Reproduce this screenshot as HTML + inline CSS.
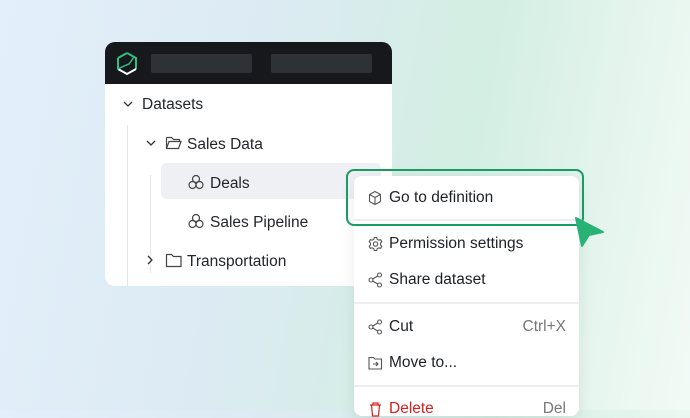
<!DOCTYPE html>
<html><head><style>
*{margin:0;padding:0;box-sizing:border-box}
body{width:690px;height:410px;overflow:hidden;position:relative;font-family:"Liberation Sans",sans-serif;
background:linear-gradient(100deg,#e3effb 0%,#dcebf3 35%,#d3eee2 65%,#eaf7f1 90%,#f2faf6 100%);}
.panel{position:absolute;left:105px;top:42px;width:287px;height:244px;background:#fff;border-radius:10px;overflow:hidden}
.hdr{height:42px;background:#16181b;position:relative}
.bar{position:absolute;top:12px;height:19px;background:#2e3236;border-radius:2px}
.t{position:absolute;font-size:15.5px;color:#22252a;white-space:nowrap}
.vl{position:absolute;width:1px;background:#e3e5e8}
.menu{position:absolute;left:354px;top:176px;width:225px;height:240px;background:#fff;border-radius:8px;box-shadow:0 4px 16px rgba(0,0,0,.08)}
.sep{position:absolute;left:0;width:225px;height:2px;background:#eceef1}
.mi{position:absolute;left:14px;font-size:15.5px;color:#1d2024;white-space:nowrap}
.mi svg{position:absolute;left:0;top:1px}
.mi span{position:absolute;left:21px;top:0}
</style></head><body>
<div class="panel">
 <div class="hdr">
  <svg style="position:absolute;left:10px;top:9px" width="24" height="26" viewBox="0 0 24 26"><path d="M12 2L21 7V18" fill="none" stroke="#2fbf80" stroke-width="2"/><path d="M3 7L12 2M3 7V18" fill="none" stroke="#2fbf80" stroke-width="2"/><path d="M3 18L12 23L21 18" fill="none" stroke="#fff" stroke-width="2"/><path d="M3 18L9 15L14 13L19 6" fill="none" stroke="#2fbf80" stroke-width="1.5"/></svg>
  <div class="bar" style="left:46px;width:101px"></div>
  <div class="bar" style="left:166px;width:101px"></div>
 </div>
 <div class="vl" style="left:22px;top:83px;height:161px"></div>
 <div class="vl" style="left:45px;top:133px;height:98px"></div>
 <div style="position:absolute;left:56px;top:121px;width:220px;height:36px;background:#eef0f3;border-radius:5px"></div>
 <svg style="position:absolute;left:17px;top:57px" width="12" height="10"><path d="M2 3L6 7L10 3" fill="none" stroke="#333" stroke-width="1.3"/></svg>
 <div class="t" style="left:37px;top:54px">Datasets</div>
 <svg style="position:absolute;left:40px;top:96px" width="12" height="10"><path d="M2 3L6 7L10 3" fill="none" stroke="#333" stroke-width="1.3"/></svg>
 <svg style="position:absolute;left:60px;top:93px" width="18" height="16"><path d="M1.5 2.5h5l2 2h6v2M1.5 2.5v11h12l2.5-7h-12l-2.5 7" fill="none" stroke="#444" stroke-width="1.2"/></svg>
 <div class="t" style="left:82px;top:94px">Sales Data</div>
 <svg style="position:absolute;left:82px;top:131px" width="18" height="18"><g fill="none" stroke="#444" stroke-width="1.2"><circle cx="9" cy="6" r="3.5"/><circle cx="5.5" cy="12" r="3.5"/><circle cx="12.5" cy="12" r="3.5"/></g></svg>
 <div class="t" style="left:105px;top:133px">Deals</div>
 <svg style="position:absolute;left:82px;top:170px" width="18" height="18"><g fill="none" stroke="#444" stroke-width="1.2"><circle cx="9" cy="6" r="3.5"/><circle cx="5.5" cy="12" r="3.5"/><circle cx="12.5" cy="12" r="3.5"/></g></svg>
 <div class="t" style="left:105px;top:172px">Sales Pipeline</div>
 <svg style="position:absolute;left:40px;top:212px" width="10" height="12"><path d="M3 2L7 6L3 10" fill="none" stroke="#333" stroke-width="1.3"/></svg>
 <svg style="position:absolute;left:60px;top:210px" width="18" height="17"><path d="M1.5 2.5h5l2 2h7.5v10h-14.5z" fill="none" stroke="#444" stroke-width="1.2"/></svg>
 <div class="t" style="left:82px;top:211px">Transportation</div>
</div>
<div class="menu">
 <div class="mi" style="top:13px"><svg width="14" height="16"><path d="M7 1.5L12.5 4.5V11.5L7 14.5L1.5 11.5V4.5Z M1.5 4.5L7 7.5L12.5 4.5M7 7.5V14.5" fill="none" stroke="#555" stroke-width="1.1"/></svg><span>Go to definition</span></div>
 <div class="sep" style="top:43px"></div>
 <div class="mi" style="top:59px"><svg width="15" height="16"><circle cx="7.5" cy="8" r="2.2" fill="none" stroke="#555" stroke-width="1.1"/><path d="M6.3 1.5h2.4l.5 1.8 1.6.9 1.8-.5 1.2 2.1-1.3 1.3v1.8l1.3 1.3-1.2 2.1-1.8-.5-1.6.9-.5 1.8H6.3l-.5-1.8-1.6-.9-1.8.5-1.2-2.1 1.3-1.3V7.1L1.2 5.8l1.2-2.1 1.8.5 1.6-.9z" fill="none" stroke="#555" stroke-width="1.1"/></svg><span>Permission settings</span></div>
 <div class="mi" style="top:95px"><svg width="15" height="16"><g fill="none" stroke="#555" stroke-width="1.1"><circle cx="11.5" cy="3" r="2"/><circle cx="3" cy="8" r="2"/><circle cx="11.5" cy="13" r="2"/><path d="M4.8 7L9.7 4M4.8 9L9.7 12"/></g></svg><span>Share dataset</span></div>
 <div class="sep" style="top:126px"></div>
 <div class="mi" style="top:142px"><svg width="15" height="16"><g fill="none" stroke="#555" stroke-width="1.1"><circle cx="11.5" cy="3" r="2"/><circle cx="3" cy="8" r="2"/><circle cx="11.5" cy="13" r="2"/><path d="M4.8 7L9.7 4M4.8 9L9.7 12"/></g></svg><span>Cut</span></div>
 <div style="position:absolute;right:13px;top:142px;font-size:15.5px;color:#777">Ctrl+X</div>
 <div class="mi" style="top:178px"><svg width="15" height="16"><path d="M1 2.5h4.5l1.5 1.5h6.5v10h-12.5z M5 9h5M8 7l2 2-2 2" fill="none" stroke="#555" stroke-width="1.1"/></svg><span>Move to...</span></div>
 <div class="sep" style="top:209px"></div>
 <div class="mi" style="top:224px;color:#d42020"><svg width="15" height="16"><path d="M2 4h11M5 4V2h5v2M3.5 4l1 11h6l1-11" fill="none" stroke="#d42020" stroke-width="1.2"/></svg><span>Delete</span></div>
 <div style="position:absolute;right:13px;top:224px;font-size:15.5px;color:#777">Del</div>
</div>
<div style="position:absolute;left:346px;top:169px;width:238px;height:57px;border:2.5px solid #1b9a63;border-radius:8px"></div>
<svg style="position:absolute;left:570px;top:213px" width="40" height="40"><path d="M6 5L33 19L19 22L12 33Z" fill="#29b276" stroke="#29b276" stroke-width="2" stroke-linejoin="round"/></svg>
</body></html>
